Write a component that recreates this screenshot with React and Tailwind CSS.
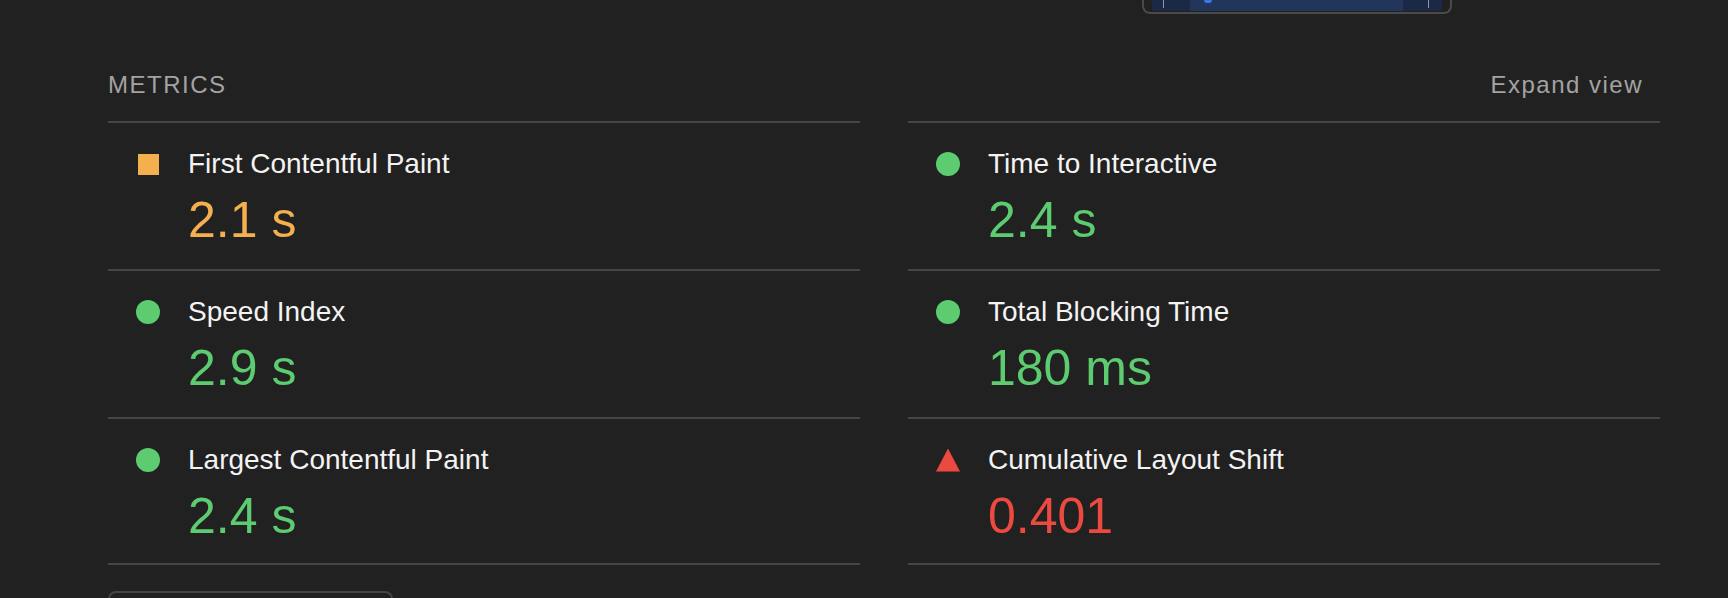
import React from "react";

const metrics = [
  { label: "First Contentful Paint", value: "2.1 s", status: "average" },
  { label: "Time to Interactive", value: "2.4 s", status: "pass" },
  { label: "Speed Index", value: "2.9 s", status: "pass" },
  { label: "Total Blocking Time", value: "180 ms", status: "pass" },
  { label: "Largest Contentful Paint", value: "2.4 s", status: "pass" },
  { label: "Cumulative Layout Shift", value: "0.401", status: "fail" },
];

const valueColor = {
  pass: "text-[#5dcb70]",
  average: "text-[#f4b04f]",
  fail: "text-[#ec4a40]",
};

function StatusIcon({ status }) {
  if (status === "average") {
    return (
      <span className="flex w-[24px] h-[24px] items-center justify-center shrink-0">
        <span className="block w-[21px] h-[21px] bg-[#f4b04f]" />
      </span>
    );
  }
  if (status === "fail") {
    return (
      <svg width="24" height="24" viewBox="0 0 24 24" className="shrink-0">
        <polygon points="12,0.5 24,23.5 0,23.5" fill="#ec4a40" />
      </svg>
    );
  }
  return <span className="block w-[24px] h-[24px] rounded-full bg-[#5dcb70] shrink-0" />;
}

function MetricRow({ metric, last }) {
  return (
    <div
      className={
        last
          ? "border-t-2 border-b-2 border-[#454545] pt-[27px] pb-[22px]"
          : "border-t-2 border-[#454545] pt-[27px] pb-[24px]"
      }
    >
      <div className="flex items-center gap-[28px] pl-[28px]">
        <StatusIcon status={metric.status} />
        <span className="text-[28px] leading-[28px] text-[#f3f3f3]">{metric.label}</span>
      </div>
      <div
        className={`pl-[80px] mt-[17px] text-[50px] leading-[50px] ${valueColor[metric.status]}`}
      >
        {metric.value}
      </div>
    </div>
  );
}

export default function App() {
  const left = metrics.filter((_, i) => i % 2 === 0);
  const right = metrics.filter((_, i) => i % 2 === 1);

  return (
    <div
      className="w-full h-[598px] overflow-hidden bg-[#212121] pl-[108px] pr-[68px]"
      style={{ fontFamily: '"Liberation Sans", Arial, sans-serif' }}
    >
      {/* bottom edge of the screenshot thumbnail above */}
      <div className="ml-[1034px] w-[310px] h-[14px] border-2 border-t-0 border-[#4a4a4a] rounded-b-[8px] px-[8px] pb-[1px]">
        <div className="flex h-full bg-[#1b2947]">
          <span className="ml-[11px] w-[1px] h-[8px] bg-[#8c96a8]" />
          <div className="ml-[26px] w-[213px] h-full bg-[#22355a] flex items-start pl-[14px]">
            <span className="w-[8px] h-[3px] rounded-b-full bg-[#3f74e6]" />
          </div>
          <span className="ml-[25px] w-[1px] h-[8px] bg-[#8c96a8]" />
        </div>
      </div>

      <div className="flex items-start justify-between pt-[59px] pb-[24px] text-[24px] leading-[24px] tracking-[1.5px] text-[#a3a3a3]">
        <span>METRICS</span>
        <span className="pr-[17px]">Expand view</span>
      </div>

      <div className="grid grid-cols-2 gap-x-[48px]">
        <div>
          {left.map((m, i) => (
            <MetricRow key={m.label} metric={m} last={i === left.length - 1} />
          ))}
        </div>
        <div>
          {right.map((m, i) => (
            <MetricRow key={m.label} metric={m} last={i === right.length - 1} />
          ))}
        </div>
      </div>

      <div className="mt-[26px] w-[285px] h-[40px] border-2 border-[#454545] rounded-[8px]" />
    </div>
  );
}
